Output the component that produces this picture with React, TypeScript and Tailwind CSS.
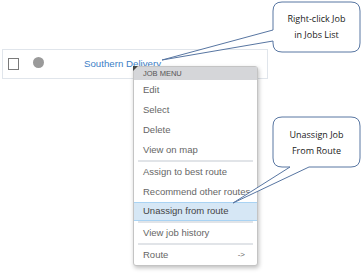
const items1 = ["Edit", "Select", "Delete", "View on map"]
const items2 = ["Assign to best route", "Recommend other routes"]

const Separator = () => <div className="h-[2px] mx-[4px] bg-[#e1e4e8]"></div>

export default function App() {
  return (
    <div className="relative w-[363px] h-[275px] bg-white overflow-hidden font-['Liberation_Sans',Arial,sans-serif]">
      {/* job row */}
      <div className="ml-[2px] mt-[49px] w-[266px] h-[30px] border border-[#e0e5eb] flex items-center pl-[5px]">
        <div className="w-[11px] h-[12px] border border-[#7a7a7a] bg-white"></div>
        <div className="ml-[14px] w-[11px] h-[11px] rounded-full bg-[#9a9a9a] -mt-[3px]"></div>
        <span className="ml-[40px] text-[9.7px] text-[#3d80c6]">Southern Delivery</span>
      </div>

      {/* context menu */}
      <div className="absolute left-[133px] top-[66px] w-[125px] h-[200px] bg-white border border-[#c4c4c4] rounded-[3px] shadow-[1px_2px_4px_rgba(0,0,0,0.25)] text-[9.5px] text-[#666]">
        <div className="h-[13px] bg-[#d5d6d9] flex items-center pl-[9px] text-[7.5px] text-[#555]">JOB MENU</div>
        {items1.map((t) => (
          <div key={t} className="h-[20px] flex items-center pl-[9px]">{t}</div>
        ))}
        <Separator />
        {items2.map((t) => (
          <div key={t} className="h-[20px] flex items-center pl-[9px] whitespace-nowrap">{t}</div>
        ))}
        <div className="h-[19px] flex items-center pl-[9px] bg-[#d6e7f5] border-y border-[#a9d3f3] text-[#444]">Unassign from route</div>
        <Separator />
        <div className="h-[20px] flex items-center pl-[9px]">View job history</div>
        <Separator />
        <div className="h-[20px] flex items-center justify-between pl-[9px] pr-[12px]">
          <span>Route</span>
          <span className="text-[8px]">-&gt;</span>
        </div>
        {/* cursor tip */}
        <div className="absolute -left-[1px] -top-[1px] w-0 h-0 border-t-[5px] border-r-[5px] border-t-[#444] border-r-transparent"></div>
      </div>

      {/* callouts */}
      <svg className="absolute inset-0 pointer-events-none" width="363" height="275" viewBox="0 0 363 275">
        <path
          d="M282 2 H351 Q360 2 360 11 V43 Q360 52 351 52 H282 Q273 52 273 43 V41 L162 60 L273 30 V11 Q273 2 282 2 Z"
          fill="white"
          stroke="#5876a2"
          strokeWidth="1"
        />
        <path
          d="M282 117 H351 Q360 117 360 126 V158 Q360 167 351 167 H309 L233 203 L290 167 H282 Q273 167 273 158 V126 Q273 117 282 117 Z"
          fill="white"
          stroke="#5876a2"
          strokeWidth="1"
        />
      </svg>
      <div className="absolute left-[273px] top-[11px] w-[87px] flex flex-col items-center text-[9px] leading-[16px] text-[#1a1a1a] font-['Open_Sans',sans-serif]">
        <span>Right-click Job</span>
        <span>in Jobs List</span>
      </div>
      <div className="absolute left-[273px] top-[127px] w-[87px] flex flex-col items-center text-[9px] leading-[16px] text-[#1a1a1a] font-['Open_Sans',sans-serif]">
        <span>Unassign Job</span>
        <span>From Route</span>
      </div>
    </div>
  )
}
